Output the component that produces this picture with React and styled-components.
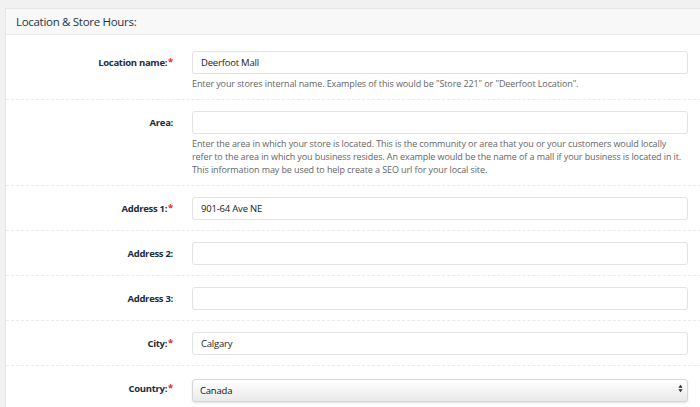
import React from 'react';
import styled, { createGlobalStyle } from 'styled-components';

const GlobalStyle = createGlobalStyle`
  html, body {
    margin: 0;
    padding: 0;
    background: #f1f1f1;
    overflow: hidden;
  }
  body {
    font-family: "Open Sans", "Noto Sans", sans-serif;
  }
`;

const fields = [
  {
    label: 'Location name:',
    required: true,
    value: 'Deerfoot Mall',
    help: 'Enter your stores internal name. Examples of this would be "Store 221" or "Deerfoot Location".',
  },
  {
    label: 'Area:',
    value: '',
    help:
      'Enter the area in which your store is located. This is the community or area that you or your customers would locally refer to the area in which you business resides. An example would be the name of a mall if your business is located in it. This information may be used to help create a SEO url for your local site.',
  },
  { label: 'Address 1:', required: true, value: '901-64 Ave NE' },
  { label: 'Address 2:', value: '' },
  { label: 'Address 3:', value: '' },
  { label: 'City:', required: true, value: 'Calgary' },
];

const App = () => {
  return (
    <>
      <GlobalStyle />
      <Panel>
        <Header>Location &amp; Store Hours:</Header>
        <Body>
          {fields.map((f) => (
            <Row key={f.label}>
              <Label>
                {f.label}
                {f.required && <Star>*</Star>}
              </Label>
              <Field>
                <Input defaultValue={f.value} />
                {f.help && <Help>{f.help}</Help>}
              </Field>
            </Row>
          ))}
          <Row $last>
            <Label>
              Country:<Star>*</Star>
            </Label>
            <Field>
              <SelectWrap>
                <Select defaultValue="Canada">
                  <option>Canada</option>
                  <option>United States</option>
                </Select>
                <Arrows viewBox="0 0 6 10" width="5" height="9">
                  <path d="M3 0.5 L5.5 4 L0.5 4 Z" fill="#1f2f3c" />
                  <path d="M3 9.5 L5.5 6 L0.5 6 Z" fill="#1f2f3c" />
                </Arrows>
              </SelectWrap>
            </Field>
          </Row>
        </Body>
      </Panel>
    </>
  );
};

const Panel = styled.div`
  margin: 8px 0 0 5px;
  width: calc(100% + 10px);
  background: #ffffff;
  border: 1px solid #e6e6e6;
`;

const Header = styled.div`
  height: 25px;
  padding-left: 10px;
  display: flex;
  align-items: center;
  background: #f8f8f8;
  border-bottom: 1px solid #ebebeb;
  color: #1f3447;
  font-size: 11.5px;
  letter-spacing: -0.3px;
`;

const Body = styled.div`
  padding-top: 5px;
`;

const Row = styled.div`
  display: grid;
  grid-template-columns: 167px 496px;
  column-gap: 19px;
  padding: 11px 0 10px;
  border-bottom: ${(p) => (p.$last ? 'none' : '1px dashed #ebebeb')};
`;

const Label = styled.label`
  height: 23px;
  display: flex;
  align-items: center;
  justify-content: flex-end;
  font-size: 9.5px;
  letter-spacing: -0.3px;
  font-weight: 700;
  color: #1c2d3b;
`;

const Star = styled.span`
  color: #e8262b;
  align-self: flex-start;
  margin-top: 4px;
  margin-left: 1px;
`;

const Field = styled.div`
  display: flex;
  flex-direction: column;
`;

const Input = styled.input`
  box-sizing: border-box;
  height: 23px;
  width: 100%;
  padding: 0 8px;
  border: 1px solid #e3e3e3;
  border-radius: 3px;
  font-family: inherit;
  font-size: 9.5px;
  letter-spacing: -0.2px;
  color: #222;
  outline: none;
`;

const Help = styled.p`
  margin: 3px 0 -1px;
  font-size: 9px;
  letter-spacing: -0.1px;
  line-height: 13px;
  color: #666;
`;

const SelectWrap = styled.div`
  position: relative;
`;

const Select = styled.select`
  box-sizing: border-box;
  appearance: none;
  height: 23px;
  width: 100%;
  padding: 0 7px;
  border: 1px solid #d6d6d6;
  border-radius: 3px;
  background: linear-gradient(#ffffff, #e9e9e9);
  box-shadow: 0 1px 2px rgba(0, 0, 0, 0.12);
  font-family: inherit;
  font-size: 9.5px;
  letter-spacing: -0.2px;
  color: #111;
  outline: none;
`;

const Arrows = styled.svg`
  position: absolute;
  right: 5px;
  top: 7px;
  pointer-events: none;
`;

export default App;
